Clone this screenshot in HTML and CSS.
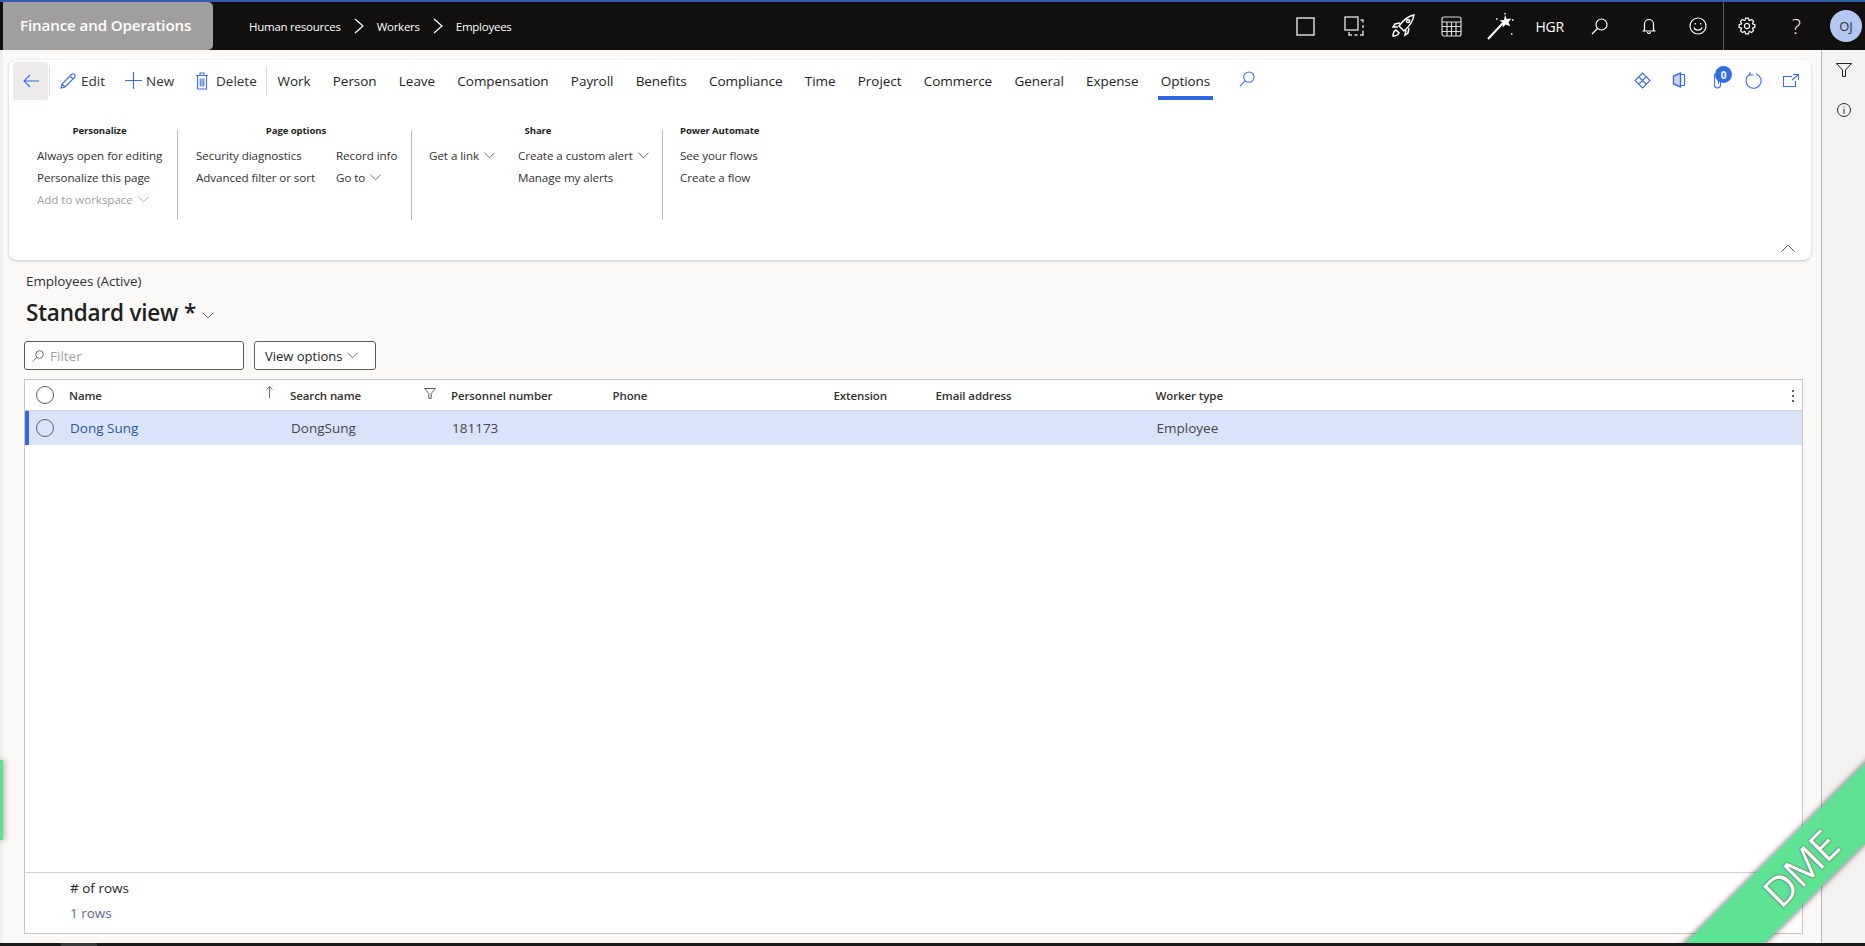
FILE: index.html
```html
<!DOCTYPE html>
<html lang="en">
<head>
<meta charset="utf-8">
<title>Employees</title>
<link rel="stylesheet" href="styles.css">
</head>
<body>
<div class="app">
  <header class="topbar">
    <div class="brand">Finance and Operations</div>
    <nav class="crumbs">
      <span>Human resources</span>
      <svg class="crumb-sep" viewBox="0 0 10 16"><path d="M1 1l8 7-8 7"/></svg>
      <span>Workers</span>
      <svg class="crumb-sep" viewBox="0 0 10 16"><path d="M1 1l8 7-8 7"/></svg>
      <span>Employees</span>
    </nav>
    <div class="top-icons">
      <svg class="ti ti-square" viewBox="0 0 19 19"><rect x="1" y="1" width="17" height="17"/></svg>
      <svg class="ti ti-copy" viewBox="0 0 20 20"><rect x="1" y="1" width="13" height="13"/><path d="M16.500 4h2.500v2.500M19 9v3M19 14.500V19h-3M13.500 19h-3M8 19H5v-3"/></svg>
      <svg class="ti ti-rocket" viewBox="0 0 24 24"><path d="M23 1c-1 6-3 10-10 16l-5-5C13 5 17 2 23 1z"/><path d="M9 9l-5 1-2 3 5 0M15 16l-1 5 3-2 1-5"/><circle cx="17" cy="7" r="1.600"/><path d="M5 16c-2 1-3 3-3 6 3 0 5-1 6-3z"/></svg>
      <svg class="ti ti-table" viewBox="0 0 21 21"><rect x="1" y="1" width="19" height="19" rx="2"/><path d="M1 6h19M1 10.500h19M1 15.500h19M6 6v14M10.500 6v14M15 6v14"/></svg>
      <svg class="ti ti-wand" viewBox="0 0 27 27"><path class="wand-line" d="M1 26L16 10"/><path class="wand-star" d="M18 2l1.800 4 4.500-.6-2.800 3.800 1.800 4-4.500-1.600-3.300 2.800.5-4.500L12.500 7.500l4.500-.6z"/><path class="wand-dots" d="M9 6h1.500M25 7h1.500M24 21h1.500M18 0v1.500"/></svg>
      <span class="company">HGR</span>
      <svg class="ti ti-search" viewBox="0 0 17 17"><circle cx="10.500" cy="6.500" r="5.500"/><path d="M6.500 10.500L1 16"/></svg>
      <svg class="ti ti-bell" viewBox="0 0 14 16"><path d="M2.500 12V6a4.500 4.500 0 0 1 9 0v6l1 1H1.500zM5.500 14a1.500 1.500 0 0 0 3 0"/></svg>
      <svg class="ti ti-smile" viewBox="0 0 18 18"><circle cx="9" cy="9" r="8"/><path d="M5 10.500c1 3.500 7 3.500 8 0"/><path d="M6.300 6v1.500M11.700 6v1.500"/></svg>
      <span class="top-sep"></span>
      <svg class="ti ti-gear" viewBox="-9 -9 18 18"><path d="M5.640-2.050L7.880-1.390 7.880 1.390 5.640 2.050 5.440 2.540 6.550 4.590 4.590 6.550 2.540 5.440 2.050 5.640 1.390 7.880-1.390 7.880-2.050 5.640-2.540 5.440-4.590 6.550-6.550 4.590-5.440 2.540-5.640 2.050-7.880 1.390-7.880-1.390-5.640-2.050-5.440-2.540-6.550-4.590-4.590-6.550-2.540-5.440-2.050-5.640-1.390-7.880 1.390-7.880 2.050-5.640 2.540-5.440 4.590-6.550 6.550-4.590 5.440-2.540z"/><circle r="2.600"/></svg>
      <span class="help">?</span>
      <span class="avatar">OJ</span>
    </div>
  </header>

  <div class="main">
    <div class="content">
      <section class="card">
        <div class="actions">
          <button class="back"><svg class="ai" viewBox="0 0 16 14"><path d="M16 7H1M7 1L1 7l6 6"/></svg></button>
          <span class="act-sep sep-a"></span>
          <span class="act act-edit"><svg class="ai" viewBox="0 0 16 16"><path d="M1 15l1-4L11.500 1.500a1.800 1.800 0 0 1 3 3L5 14zM10 3l3 3M2 11l3 3"/></svg>Edit</span>
          <span class="act act-new"><svg class="ai" viewBox="0 0 17 17"><path d="M8.500 0v17M0 8.500h17"/></svg>New</span>
          <span class="act act-del"><svg class="ai" viewBox="0 0 12 18"><path d="M0 3.500h12M4 3.500V1h4v2.500M1.500 3.500V17h9V3.500M4.200 6.500v8M6 6.500v8M7.800 6.500v8"/></svg>Delete</span>
          <span class="act-sep sep-b"></span>
          <nav class="tabs">
            <span class="tab">Work</span><span class="tab">Person</span><span class="tab">Leave</span><span class="tab">Compensation</span><span class="tab">Payroll</span><span class="tab">Benefits</span><span class="tab">Compliance</span><span class="tab">Time</span><span class="tab">Project</span><span class="tab">Commerce</span><span class="tab">General</span><span class="tab">Expense</span><span class="tab is-active">Options</span>
          </nav>
          <svg class="ai tab-search" viewBox="0 0 17 17"><circle cx="10.500" cy="6.500" r="5.500"/><path d="M6.500 10.500L1 16"/></svg>
          <div class="card-tools">
            <svg class="ai tool-diamond" viewBox="0 0 17 17"><path d="M8.500 1L16 8.500 8.500 16 1 8.500zM5 5l3.500 3.500L12 5M5 12l3.500-3.500L12 12"/></svg>
            <svg class="ai tool-office" viewBox="0 0 14 16"><path class="fat" d="M1.500 4v8l7 3V1z"/><path d="M8.500 2.500h4v11h-4"/></svg>
            <span class="tool-clip">
              <svg class="ai" viewBox="0 0 9 17"><path d="M7.500 4v9a3 3 0 0 1-6 0V3.500a2 2 0 0 1 4 0V12"/></svg>
              <span class="badge">0</span>
            </span>
            <svg class="ai tool-refresh" viewBox="0 0 17 17"><path d="M5 2.200A7.500 7.500 0 1 0 11 1.700M5 0v3h3.500"/></svg>
            <svg class="ai tool-open" viewBox="0 0 16 13"><path d="M9 2.500H.5v10h12V7M10 .5h5.500V6M15.500.5L9 6"/></svg>
          </div>
        </div>
        <div class="ribbon">
          <div class="group g-personal">
            <h4>Personalize</h4>
            <div class="cmds">
              <div class="col">
                <span>Always open for editing</span>
                <span>Personalize this page</span>
                <span class="off">Add to workspace<svg class="chev" viewBox="0 0 12 7"><path d="M.5.500L6 6 11.500.5"/></svg></span>
              </div>
            </div>
          </div>
          <div class="group g-page">
            <h4>Page options</h4>
            <div class="cmds">
              <div class="col c-page1">
                <span>Security diagnostics</span>
                <span>Advanced filter or sort</span>
              </div>
              <div class="col">
                <span>Record info</span>
                <span>Go to<svg class="chev" viewBox="0 0 12 7"><path d="M.5.500L6 6 11.500.5"/></svg></span>
              </div>
            </div>
          </div>
          <div class="group g-share">
            <h4>Share</h4>
            <div class="cmds">
              <div class="col c-share1">
                <span>Get a link<svg class="chev" viewBox="0 0 12 7"><path d="M.5.500L6 6 11.500.5"/></svg></span>
              </div>
              <div class="col">
                <span>Create a custom alert<svg class="chev" viewBox="0 0 12 7"><path d="M.5.500L6 6 11.500.5"/></svg></span>
                <span>Manage my alerts</span>
              </div>
            </div>
          </div>
          <div class="group g-flow">
            <h4>Power Automate</h4>
            <div class="cmds">
              <div class="col">
                <span>See your flows</span>
                <span>Create a flow</span>
              </div>
            </div>
          </div>
        </div>
        <svg class="collapse" viewBox="0 0 14 8"><path d="M.5 7.500L7 1l6.500 6.500"/></svg>
      </section>

      <div class="caption">Employees (Active)</div>
      <div class="view-title"><h1>Standard view *</h1><svg class="chev chev-title" viewBox="0 0 12 7"><path d="M.5.500L6 6 11.500.5"/></svg></div>
      <div class="toolbar">
        <label class="filter"><svg viewBox="0 0 12 12"><circle cx="7.500" cy="4.500" r="3.800"/><path d="M4.700 7.300L.5 11.500"/></svg><span>Filter</span></label>
        <button class="view-opts">View options<svg class="chev" viewBox="0 0 12 7"><path d="M.5.500L6 6 11.500.5"/></svg></button>
      </div>

      <section class="grid">
        <div class="g-head g-cols">
          <span class="radio"></span>
          <span class="cell cell-icon">Name<svg class="sort" viewBox="0 0 7 12"><path d="M3.500 12V.5M.5 3.500l3-3 3 3"/></svg></span>
          <span class="cell cell-icon cell-filter">Search name<svg class="col-filter" viewBox="0 0 12 11"><path d="M.5.500h11L7.200 5.500v5h-2.400v-5z"/></svg></span>
          <span class="cell">Personnel number</span>
          <span class="cell">Phone</span>
          <span class="cell">Extension</span>
          <span class="cell">Email address</span>
          <span class="cell">Worker type</span>
          <span class="more"><i></i><i></i><i></i></span>
        </div>
        <div class="g-row g-cols">
          <span class="radio"></span>
          <a class="cell link">Dong Sung</a>
          <span class="cell">DongSung</span>
          <span class="cell">181173</span>
          <span class="cell"></span>
          <span class="cell"></span>
          <span class="cell"></span>
          <span class="cell">Employee</span>
        </div>
        <div class="g-empty"></div>
        <div class="g-foot">
          <div class="foot-label"># of rows</div>
          <div class="foot-value">1 rows</div>
        </div>
      </section>
    </div>
    <aside class="side">
      <svg class="side-filter" viewBox="0 0 16 14"><path d="M.5.500h15L9.500 7v6.500h-3V7z"/></svg>
      <svg class="side-info" viewBox="0 0 14 14"><circle cx="7" cy="7" r="6.500"/><path d="M7 6v5M7 3.500v1.200"/></svg>
    </aside>
  </div>
  <footer class="taskbar"><span class="task-item"></span></footer>

  <div class="ribbon-corner"><span>DME</span></div>
  <div class="ribbon-left"></div>
</div>
</body>
</html>
```
FILE: styles.css
```css
* { box-sizing: border-box; }
html, body { margin: 0; height: 100%; }
body { font-family: "Open Sans", "Noto Sans", sans-serif; color: #201f1e; overflow: hidden; background: #faf9f8; }
.app { position: relative; width: 1865px; height: 946px; display: flex; flex-direction: column; overflow: hidden; }

/* top bar */
.topbar { height: 50px; flex: none; background: #11100f; border-top: 2px solid #2f5da6; display: flex; align-items: stretch; padding-left: 3px; color: #fff; }
.brand { width: 210px; background: #a19f9d; border-radius: 0 5px 5px 0; font-size: 15.100px; font-weight: 600; padding: 0 0 2px 17px; display: flex; align-items: center; letter-spacing: -.1px; }
.crumbs { display: flex; align-items: center; margin-left: 36px; font-size: 11.500px; letter-spacing: -.25px; }
.crumb-sep { width: 10px; height: 16px; margin: 0 13px; fill: none; stroke: #fff; stroke-width: 1.200; }
.top-icons { margin-left: auto; display: flex; align-items: center; position: relative; }
.ti { display: block; fill: none; stroke: #fff; stroke-width: 1.200; flex: none; }
.ti-square { width: 19px; height: 19px; stroke: #d8d8d8; stroke-width: 1.500; margin-right: 29px; }
.ti-copy { width: 20px; height: 20px; stroke: #d8d8d8; stroke-width: 1.400; margin-right: 26.500px; }
.ti-rocket { width: 24px; height: 24px; stroke-width: 1.500; margin-right: 26px; }
.ti-table { width: 21px; height: 21px; stroke: #d8d8d8; margin-right: 25px; }
.ti-wand { width: 27px; height: 27px; margin-right: 22px; }
.wand-line { stroke-width: 2; }
.wand-star { fill: #fff; stroke: none; }
.wand-dots { stroke-width: 1.500; }
.company { font-size: 14px; width: 28px; margin-right: 27px; letter-spacing: -.3px; }
.ti-search { width: 17px; height: 17px; margin-right: 34px; }
.ti-bell { width: 14px; height: 16px; margin-right: 33px; }
.ti-smile { width: 18px; height: 18px; margin-right: 16px; }
.top-sep { width: 1px; height: 48px; background: #605e5c; margin-right: 14.500px; }
.ti-gear { width: 18px; height: 18px; margin-right: 36px; }
.help { font-size: 21px; font-weight: 300; width: 11px; margin-right: 27px; line-height: 1; color: #fff; }
.avatar { width: 32px; height: 32px; border-radius: 50%; background: #b4c7f2; color: #323130; font-size: 13px; display: flex; align-items: center; justify-content: center; margin-right: 3px; }

/* main */
.main { flex: 1; display: flex; min-height: 0; border-left: 3px solid #f0efee; }
.content { flex: 1; min-width: 0; display: flex; flex-direction: column; padding: 10px 9px 9px 6px; background: #faf9f8; }
.side { width: 44px; flex: none; background: #f3f2f1; border-left: 1px solid #b9b7b5; display: flex; flex-direction: column; align-items: center; }
.side-filter { width: 16px; height: 14px; margin-top: 13px; fill: none; stroke: #201f1e; stroke-width: 1; }
.side-info { width: 14px; height: 14px; margin-top: 26px; fill: none; stroke: #323130; stroke-width: 1; }

/* command card */
.card { position: relative; height: 200px; flex: none; width: 1802px; background: #fff; border-radius: 8px; box-shadow: 0 1px 3px rgba(0,0,0,.22); }
.actions { display: flex; align-items: center; height: 40px; padding-left: 4px; font-size: 13.500px; position: relative; }
.ai { display: block; fill: none; stroke: #3b6bea; stroke-width: 1.100; flex: none; }
.back { width: 35px; height: 38px; margin-top: 2px; border: 0; padding: 0; background: #edebe9; border-radius: 3px; display: flex; align-items: center; justify-content: center; }
.back .ai { width: 16px; height: 14px; }
.act-sep { width: 1px; height: 30px; background: #e1dfdd; margin-top: 2px; }
.sep-a { margin-left: 1px; }
.act { display: flex; align-items: center; color: #323130; margin-top: 1px; }
.act-edit { margin-left: 10px; width: 65px; }
.act-edit .ai { width: 16px; height: 16px; margin-right: 5px; }
.act-new { width: 71px; }
.act-new .ai { width: 17px; height: 17px; margin-right: 4px; }
.act-del { width: 59px; }
.act-del .ai { width: 12px; height: 18px; margin-right: 8px; }
.sep-b { margin-left: 11px; }
.tabs { display: flex; gap: 22.300px; margin-left: 10.500px; height: 40px; align-items: center; color: #201f1e; letter-spacing: -.05px; }
.tab { position: relative; margin-top: 1px; }
.tab.is-active::after { content: ""; position: absolute; left: -3px; right: -3px; top: 24px; height: 4px; background: #3266e3; }
.tab-search { width: 16px; height: 16px; margin: -2px 0 0 28.500px; }
.card-tools { position: absolute; top: 12px; left: 1625px; display: flex; align-items: flex-start; }
.tool-diamond { width: 17px; height: 17px; }
.tool-office { width: 14px; height: 16px; margin-left: 21px; }
.tool-office .fat { fill: #c9d6fb; stroke-width: 1.400; }
.tool-clip { position: relative; display: block; width: 9px; height: 17px; margin-left: 27px; }
.tool-clip .ai { width: 9px; height: 17px; }
.badge { position: absolute; left: 2px; top: -6px; width: 17px; height: 17px; border-radius: 50%; background: #2f6be6; color: #fff; font-size: 10px; font-weight: 700; display: flex; align-items: center; justify-content: center; }
.tool-refresh { width: 17px; height: 17px; margin-left: 23px; }
.tool-open { width: 16px; height: 13px; margin: 2px 0 0 21px; }
.collapse { position: absolute; right: 16px; top: 184px; width: 14px; height: 8px; fill: none; stroke: #605e5c; stroke-width: 1; }

/* ribbon groups */
.ribbon { display: flex; margin-top: 30px; padding-left: 28px; font-size: 11.600px; color: #323130; letter-spacing: -.05px; }
.group { height: 90px; padding-right: 0; border-right: 1px solid #bdbbb9; flex: none; }
.group:last-child { border-right: 0; }
.group h4 { margin: -6px 0 0; font-size: 9.600px; line-height: 14px; font-weight: 700; text-align: center; color: #201f1e; letter-spacing: -.1px; }
.g-personal { width: 141px; }
.g-personal h4 { width: 125px; }
.g-page { width: 234px; padding-left: 18px; }
.g-page h4 { width: 200px; }
.g-share { width: 251px; padding-left: 17px; }
.g-share h4 { width: 218px; }
.g-flow { padding-left: 17px; }
.g-flow h4 { text-align: left; }
.cmds { display: flex; margin-top: 6px; }
.col { display: flex; flex-direction: column; gap: 0; }
.col > span { height: 22px; display: flex; align-items: center; white-space: nowrap; }
.c-page1 { width: 140px; }
.c-share1 { width: 89px; }
.off { color: #a19f9d; }
.chev { width: 11px; height: 7px; margin-left: 5px; fill: none; stroke: #605e5c; stroke-width: 1; flex: none; }
.off .chev { stroke: #a19f9d; }

/* page header */
.caption { font-size: 13.500px; line-height: 18px; margin: 12px 0 0 17px; color: #323130; letter-spacing: -.1px; }
.view-title { display: flex; align-items: center; margin: 7px 0 0 17px; height: 32px; }
.view-title h1 { margin: 0; font-size: 22.500px; line-height: 32px; font-weight: 600; color: #201f1e; letter-spacing: -.2px; }
.chev-title { width: 12px; height: 7px; margin: 5px 0 0 6px; }
.toolbar { display: flex; margin: 12px 0 0 15px; gap: 10px; }
.filter { width: 220px; height: 29px; border: 1px solid #605e5c; border-radius: 3px; background: #fff; display: flex; align-items: center; padding-left: 7px; font-size: 13.500px; color: #a19f9d; }
.filter svg { width: 12px; height: 12px; margin-right: 6px; fill: none; stroke: #605e5c; stroke-width: .900; }
.view-opts { width: 122px; height: 29px; border: 1px solid #605e5c; border-radius: 3px; background: #fff; font: inherit; font-size: 13px; color: #201f1e; padding: 0 0 0 10px; display: flex; align-items: center; }

/* grid */
.grid { flex: 1; min-height: 0; margin: 9px 9px 0 15px; background: #fff; border: 1px solid #c8c6c4; display: flex; flex-direction: column; position: relative; }
.g-cols { display: grid; grid-template-columns: 44px 221px 161px 161.500px 221px 102px 220px 1fr; align-items: center; font-size: 11.500px; }
.g-head { height: 31px; flex: none; border-bottom: 1px solid #d2d0ce; font-weight: 600; color: #323130; position: relative; letter-spacing: -.1px; }
.g-row { height: 34px; flex: none; background: #d9e4fb; border-left: 4px solid #3266e3; font-size: 13.500px; color: #484644; margin-left: 0; grid-template-columns: 40px 221px 161px 161.500px 221px 102px 220px 1fr; }
.g-row .cell { padding-left: 1px; }
.g-row .radio { margin-left: 7px; }
.radio { width: 18px; height: 18px; border: 1px solid #605e5c; border-radius: 50%; margin-left: 11px; background: transparent; display: block; }
.cell { white-space: nowrap; min-width: 0; }
.cell-icon { display: flex; align-items: center; justify-content: space-between; padding-right: 17px; }
.cell-filter { padding-right: 15px; }
.sort { width: 7px; height: 12px; fill: none; stroke: #8a6d6d; stroke-width: 1; margin-top: -6px; }
.col-filter { width: 12px; height: 11px; fill: none; stroke: #605e5c; stroke-width: 1; margin-top: -3px; }
.more { position: absolute; right: 8px; top: 10px; display: flex; flex-direction: column; gap: 3px; }
.more i { display: block; width: 2px; height: 2px; background: #605e5c; }
.link { color: #2b579a; }
.g-empty { flex: 1; }
.g-foot { height: 61px; flex: none; border-top: 1px solid #d2d0ce; padding: 5px 0 0 45px; }
.foot-label { font-size: 13.500px; line-height: 20px; color: #201f1e; }
.foot-value { font-size: 13.500px; line-height: 20px; margin-top: 5px; color: #5e6a8c; }

/* bottom */
.taskbar { height: 3px; flex: none; background: #1b1a19; position: relative; z-index: 3; }
.task-item { display: block; width: 36px; height: 3px; margin-left: 61px; background: #3b3a39; }

/* environment ribbon */
.ribbon-corner { position: absolute; left: 1590px; top: 850px; width: 400px; height: 56px; background: rgba(82,224,140,.93); box-shadow: 0 0 6px rgba(0,0,0,.65); transform: rotate(-45deg); display: flex; align-items: center; justify-content: center; padding-left: 28px; z-index: 2; pointer-events: none; }
.ribbon-corner span { font-family: "Open Sans", sans-serif; font-size: 41px; color: #fff; letter-spacing: -1px; text-shadow: 0 0 1px #444, 0 0 2px #555; line-height: 1; }
.ribbon-left { position: absolute; left: 0; top: 760px; width: 3px; height: 80px; background: #5de08f; box-shadow: 0 0 6px rgba(0,0,0,.6); }
```
